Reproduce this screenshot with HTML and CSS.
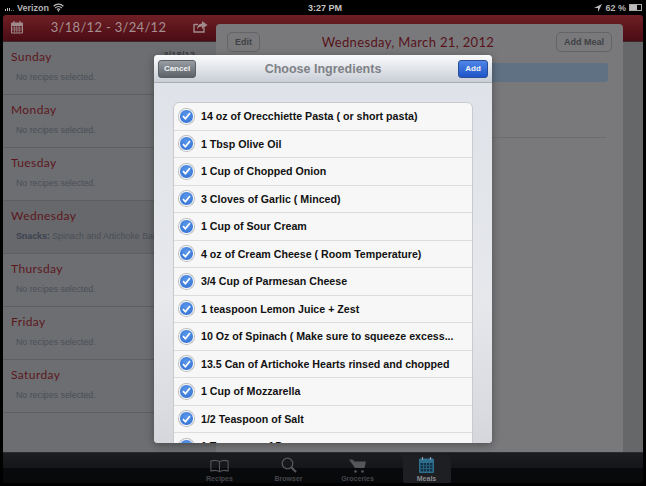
FILE: index.html
```html
<!DOCTYPE html>
<html lang="en">
<head>
<meta charset="utf-8">
<title>Choose Ingredients</title>
<link rel="stylesheet" href="styles.css">
</head>
<body>
<div class="screen">
  <div class="status">
    <div class="status-left">
      <span class="signal"><i class="b1"></i><i class="b2"></i><i class="b3"></i><i class="b4"></i><i class="b4"></i></span>
      <span>Verizon</span>
      <svg class="wifi" width="11" height="9" viewBox="0 0 11 9"><path d="M.6 3.2a7 7 0 0 1 9.8 0M2.2 5a4.7 4.7 0 0 1 6.6 0M3.9 6.6a2.3 2.3 0 0 1 3.2 0" fill="none" stroke="#bbb" stroke-width="1.2"/><path d="M5.5 9 4.4 7.6a1.6 1.6 0 0 1 2.2 0z" fill="#bbb"/></svg>
    </div>
    <div class="status-time">3:27 PM</div>
    <div class="status-right">
      <svg width="8" height="8" viewBox="0 0 8 8"><path d="M8 0 0 4h4v4z" fill="#bbb"/></svg>
      <span>62 %</span>
      <span class="battery"><i></i></span>
    </div>
  </div>

  <div class="app">
    <div class="topbar">
      <div class="topbar-left">
        <svg width="13" height="13" viewBox="0 0 13 13"><rect x="0" y="1.5" width="12" height="11" rx="1" fill="#a08a8c"/><path d="M1 5h10v6.5H1z" fill="#5c1c22"/><path d="M1 7h10M1 9h10M3.4 5v6.500M5.8 5v6.500M8.2 5v6.500" stroke="#a08a8c" stroke-width=".7"/><path d="M3 0v3M9 0v3" stroke="#a08a8c" stroke-width="1.2"/></svg>
        <span class="range">3/18/12 - 3/24/12</span>
        <svg width="15" height="12" viewBox="0 0 15 12"><path d="M1 3.500h4M1 3v8h10V7" fill="none" stroke="#a08a8c" stroke-width="1.4"/><path d="M9 0l5.500 4L9 8V5.600C6.500 5.600 5 6.500 4 8.500 4 5 6 2.600 9 2.400z" fill="#a08a8c"/></svg>
      </div>
    </div>

    <div class="content">
      <div class="week">
        <div class="day"><div class="day-head"><span class="day-name">Sunday</span><span class="day-date">3/18/12</span></div><p class="none">No recipes selected.</p></div>
        <div class="day"><span class="day-name">Monday</span><p class="none">No recipes selected.</p></div>
        <div class="day"><span class="day-name">Tuesday</span><p class="none">No recipes selected.</p></div>
        <div class="day day-active"><span class="day-name">Wednesday</span><p class="none meal"><b>Snacks:</b> Spinach and Artichoke Bake</p></div>
        <div class="day"><span class="day-name">Thursday</span><p class="none">No recipes selected.</p></div>
        <div class="day"><span class="day-name">Friday</span><p class="none">No recipes selected.</p></div>
        <div class="day"><span class="day-name">Saturday</span><p class="none">No recipes selected.</p></div>
      </div>
      <div class="detail">
        <div class="detail-head">
          <span class="btn-ghost">Edit</span>
          <span class="detail-title">Wednesday, March 21, 2012</span>
          <span class="btn-ghost">Add Meal</span>
        </div>
        <div class="detail-bar"></div>
        <div class="detail-rule"></div>
      </div>
    </div>

    <nav class="tabs">
      <div class="tab">
        <svg width="19" height="14" viewBox="0 0 21 14"><path d="M10.500 2.500C8.500.8 4 .6 1 1.500v11c3-.8 7.500-.6 9.500 1 2-1.600 6.500-1.800 9.500-1v-11c-3-.9-7.500-.7-9.500 1zm0 0v11" fill="none" stroke="#55565a" stroke-width="1.200"/></svg>
        <span>Recipes</span>
      </div>
      <div class="tab">
        <svg width="16" height="16" viewBox="0 0 16 16"><circle cx="6.500" cy="6.500" r="5.300" fill="none" stroke="#55565a" stroke-width="1.300"/><path d="M10.500 10.500 15 15" stroke="#55565a" stroke-width="2.200"/></svg>
        <span>Browser</span>
      </div>
      <div class="tab">
        <svg width="17" height="14" viewBox="0 0 17 14"><path d="M0 .5h3.500l2 2H17l-1.500 6.500H6z" fill="#55565a"/><circle cx="6.500" cy="12.500" r="1.300" fill="#55565a"/><circle cx="13.500" cy="12.500" r="1.300" fill="#55565a"/></svg>
        <span>Groceries</span>
      </div>
      <div class="tab tab-on">
        <svg width="15" height="16" viewBox="0 0 15 16"><rect y="1.500" width="15" height="14.500" rx="1" fill="#2f6f8e"/><path d="M1.500 6h12v8.500h-12z" fill="#123246"/><path d="M1.500 8.700h12M1.500 11.500h12M4.500 6v8.500M7.500 6v8.500M10.500 6v8.500" stroke="#2f6f8e" stroke-width=".7"/><path d="M3.500 0v3M11.500 0v3" stroke="#8a9aa5" stroke-width="1.200"/></svg>
        <span>Meals</span>
      </div>
    </nav>
  </div>

  <div class="modal">
    <div class="modal-head">
      <button class="btn-cancel">Cancel</button>
      <span class="modal-title">Choose Ingredients</span>
      <button class="btn-add">Add</button>
    </div>
    <div class="modal-body">
      <ul class="list">
        <li><span class="check"><svg width="9" height="8" viewBox="0 0 9 8"><path d="M1 4.200 3.400 6.700 8 1" fill="none" stroke="#fff" stroke-width="1.700"/></svg></span>14 oz of Orecchiette Pasta ( or short pasta)</li>
        <li><span class="check"><svg width="9" height="8" viewBox="0 0 9 8"><path d="M1 4.200 3.400 6.700 8 1" fill="none" stroke="#fff" stroke-width="1.700"/></svg></span>1 Tbsp Olive Oil</li>
        <li><span class="check"><svg width="9" height="8" viewBox="0 0 9 8"><path d="M1 4.200 3.400 6.700 8 1" fill="none" stroke="#fff" stroke-width="1.700"/></svg></span>1 Cup of Chopped Onion</li>
        <li><span class="check"><svg width="9" height="8" viewBox="0 0 9 8"><path d="M1 4.200 3.400 6.700 8 1" fill="none" stroke="#fff" stroke-width="1.700"/></svg></span>3 Cloves of Garlic ( Minced)</li>
        <li><span class="check"><svg width="9" height="8" viewBox="0 0 9 8"><path d="M1 4.200 3.400 6.700 8 1" fill="none" stroke="#fff" stroke-width="1.700"/></svg></span>1 Cup of Sour Cream</li>
        <li><span class="check"><svg width="9" height="8" viewBox="0 0 9 8"><path d="M1 4.200 3.400 6.700 8 1" fill="none" stroke="#fff" stroke-width="1.700"/></svg></span>4 oz of Cream Cheese ( Room Temperature)</li>
        <li><span class="check"><svg width="9" height="8" viewBox="0 0 9 8"><path d="M1 4.200 3.400 6.700 8 1" fill="none" stroke="#fff" stroke-width="1.700"/></svg></span>3/4 Cup of Parmesan Cheese</li>
        <li><span class="check"><svg width="9" height="8" viewBox="0 0 9 8"><path d="M1 4.200 3.400 6.700 8 1" fill="none" stroke="#fff" stroke-width="1.700"/></svg></span>1 teaspoon Lemon Juice + Zest</li>
        <li><span class="check"><svg width="9" height="8" viewBox="0 0 9 8"><path d="M1 4.200 3.400 6.700 8 1" fill="none" stroke="#fff" stroke-width="1.700"/></svg></span>10 Oz of Spinach ( Make sure to squeeze excess...</li>
        <li><span class="check"><svg width="9" height="8" viewBox="0 0 9 8"><path d="M1 4.200 3.400 6.700 8 1" fill="none" stroke="#fff" stroke-width="1.700"/></svg></span>13.5 Can of Artichoke Hearts rinsed and chopped</li>
        <li><span class="check"><svg width="9" height="8" viewBox="0 0 9 8"><path d="M1 4.200 3.400 6.700 8 1" fill="none" stroke="#fff" stroke-width="1.700"/></svg></span>1 Cup of Mozzarella</li>
        <li><span class="check"><svg width="9" height="8" viewBox="0 0 9 8"><path d="M1 4.200 3.400 6.700 8 1" fill="none" stroke="#fff" stroke-width="1.700"/></svg></span>1/2 Teaspoon of Salt</li>
        <li><span class="check"><svg width="9" height="8" viewBox="0 0 9 8"><path d="M1 4.200 3.400 6.700 8 1" fill="none" stroke="#fff" stroke-width="1.700"/></svg></span>1 Teaspoon of Pepper</li>
      </ul>
    </div>
  </div>
</div>
</body>
</html>
```

FILE: styles.css
```css
* { box-sizing: border-box; }
html, body { margin: 0; padding: 0; }
body { background: #000; font-family: "Liberation Sans", Arial, sans-serif; }

.screen {
  position: relative;
  width: 646px;
  height: 486px;
  overflow: hidden;
  background: #000;
  display: flex;
  flex-direction: column;
}

.status {
  height: 15px;
  flex: none;
  display: grid;
  grid-template-columns: 1fr auto 1fr;
  align-items: center;
  padding: 0 4px 0 5px;
  color: #b4b4b4;
  font-size: 9px;
  font-weight: 700;
}
.status-left { display: flex; align-items: center; gap: 3px; }
.status-right { display: flex; align-items: center; justify-content: flex-end; gap: 3px; }
.status-time { color: #c4c4c4; padding-left: 3px; }
.signal { display: flex; align-items: flex-end; gap: 1px; height: 6px; }
.signal i { width: 1px; background: #bbb; }
.signal .b1 { height: 2px; }
.signal .b2 { height: 3px; }
.signal .b3 { height: 3px; }
.signal .b4 { height: 1px; background: #777; }
.wifi { margin-left: 1px; }
.battery {
  width: 13px;
  height: 7px;
  border: 1px solid #aaa;
  display: block;
}
.battery i { display: block; width: 7px; height: 5px; background: #bbb; }

.app {
  flex: 1;
  min-height: 0;
  margin: 0 3px 3px;
  display: flex;
  flex-direction: column;
  border-radius: 3px 3px 0 0;
  overflow: hidden;
}

.topbar {
  height: 27px;
  flex: none;
  background: linear-gradient(#6f1f25, #4a0c14);
  border-bottom: 1px solid #3c2a2d;
}
.topbar-left {
  width: 213px;
  height: 100%;
  display: flex;
  align-items: center;
  justify-content: space-between;
  padding: 0 8px 2px 8px;
}
.range {
  font-family: Lato, sans-serif;
  font-size: 13px;
  letter-spacing: .3px;
  color: #a68f90;
}

.content { flex: 1; min-height: 0; display: flex; background: linear-gradient(90deg, #58595c, #666769); }

.week {
  width: 213px;
  flex: none;
  background: #6d6e71;
}
.day {
  height: 53px;
  padding: 7px 8px 0;
  border-bottom: 1px solid #5d5e61;
}
.day-active { background: #67686b; }
.day-head { display: flex; justify-content: space-between; }
.day-name {
  display: block;
  font-family: Lato, sans-serif;
  font-size: 12px;
  line-height: 16px;
  letter-spacing: .4px;
  color: #5c171d;
}
.day-date {
  font-size: 9.500px;
  color: #3d3e42;
  font-weight: 700;
  margin: 0 13px 0 0;
}
.none {
  margin: 6px 0 0 5px;
  font-size: 8.800px;
  line-height: 12px;
  color: #4a4f58;
  white-space: nowrap;
  overflow: hidden;
  width: 200px;
}
.meal b { color: #3a4250; }

.detail {
  width: 407px;
  flex: none;
  height: 428px;
  margin-top: -18px;
  background: #79797c;
  border-radius: 4px 4px 0 0;
  padding: 8px 11px 0;
  position: relative;
}
.detail-head { display: flex; justify-content: space-between; align-items: center; }
.btn-ghost {
  height: 20px;
  padding: 0 7px;
  border: 1px solid #636467;
  border-radius: 5px;
  display: flex;
  align-items: center;
  font-size: 9px;
  font-weight: 700;
  color: #3f4144;
}
.detail-title {
  font-family: Lato, sans-serif;
  font-size: 13px;
  letter-spacing: .35px;
  color: #571319;
}
.detail-bar {
  margin-top: 11px;
  height: 19px;
  border-radius: 3px;
  background: #5f7183;
  width: 381px;
}
.detail-rule {
  margin-top: 55px;
  height: 1px;
  width: 379px;
  background: #6c6d70;
}

.tabs {
  height: 31px;
  flex: none;
  display: flex;
  justify-content: center;
  padding: 2px 0 0 0;
  background: linear-gradient(#1c1d20 0, #15161a 50%, #08090b 50%, #08090b 100%);
  border-top: 1px solid #2a2b2e;
}
.tab {
  width: 48px;
  height: 28px;
  margin: 0 10.500px;
  display: flex;
  flex-direction: column;
  align-items: center;
  justify-content: flex-end;
  gap: 1px;
  font-size: 7px;
  font-weight: 700;
  color: #45464a;
  border-radius: 2px;
}
.tab span { line-height: 9px; }
.tab-on { background: #1e1f23; color: #8a8b8e; }

.modal {
  position: absolute;
  left: 154px;
  top: 55px;
  width: 338px;
  height: 388px;
  border-radius: 4px;
  overflow: hidden;
  background: #dfe2e8;
  box-shadow: 0 2px 8px rgba(0,0,0,.35);
  display: flex;
  flex-direction: column;
}
.modal-head {
  height: 28px;
  flex: none;
  display: grid;
  grid-template-columns: 1fr auto 1fr;
  align-items: center;
  padding: 0 4px;
  background: linear-gradient(#fafbfc, #c9ced7);
  border-bottom: 1px solid #a9adb5;
}
.modal-title { font-size: 12.500px; font-weight: 700; color: #7e8186; }
.btn-cancel, .btn-add {
  height: 18px;
  padding: 0;
  border: 1px solid #5b6068;
  border-radius: 3px;
  font: 700 8px "Liberation Sans", Arial, sans-serif;
  color: #f2f3f5;
}
.btn-cancel { width: 38px; background: linear-gradient(#989ca3, #5d6269); }
.btn-add { width: 30px; justify-self: end; background: linear-gradient(#4f86e8, #1e55c8); border-color: #2a4d96; }

.modal-body {
  flex: 1;
  min-height: 0;
  overflow: hidden;
  padding: 19px 19px 0;
  background: linear-gradient(#dfe2e8, #e6e8ec 60%, #d5d7dc);
}
.list {
  margin: 0;
  padding: 0;
  list-style: none;
  background: #f7f7f7;
  border: 1px solid #c8cacd;
  border-radius: 6px 6px 0 0;
}
.list li {
  height: 27.500px;
  display: flex;
  align-items: center;
  gap: 7px;
  padding-left: 5px;
  font-size: 10.650px;
  font-weight: 700;
  color: #111;
  border-bottom: 1px solid #dcdcdc;
  white-space: nowrap;
}
.check {
  width: 15px;
  height: 15px;
  flex: none;
  border-radius: 50%;
  background: radial-gradient(circle at 50% 35%, #5a97ea, #2f6dd0);
  border: 1px solid #f4f4f4;
  box-shadow: 0 0 0 1px #b9bcc2;
  display: flex;
  align-items: center;
  justify-content: center;
}
```
